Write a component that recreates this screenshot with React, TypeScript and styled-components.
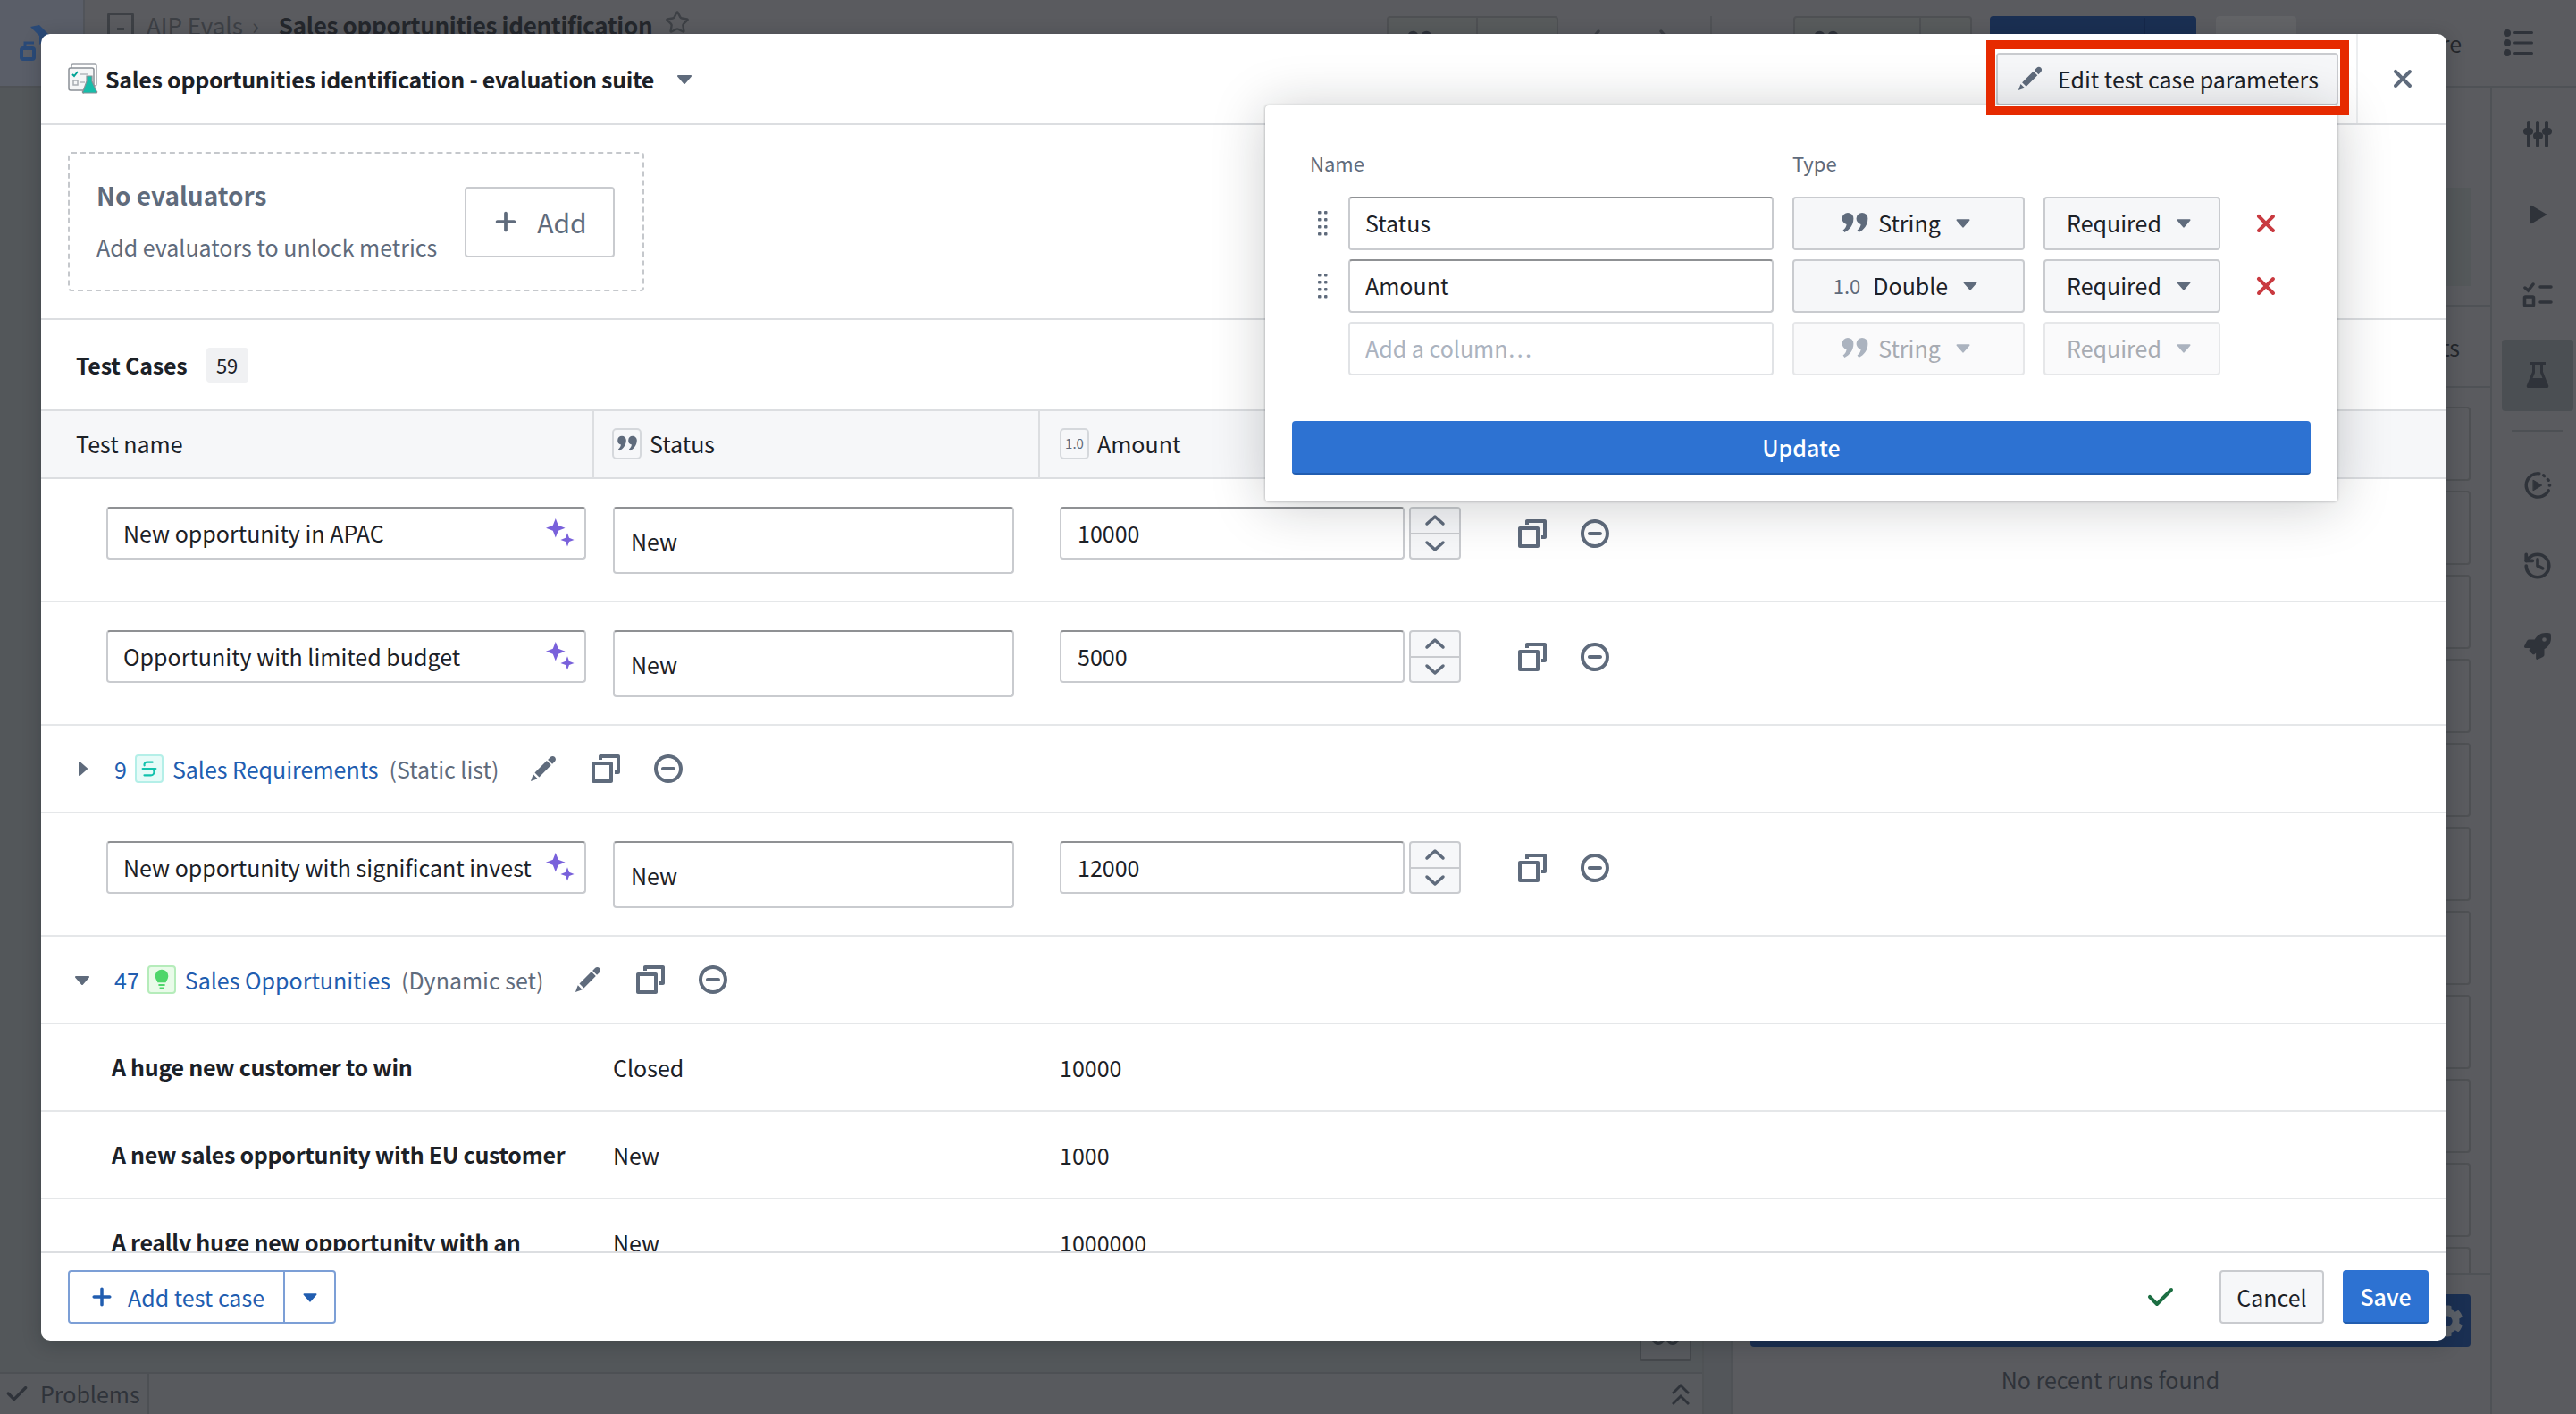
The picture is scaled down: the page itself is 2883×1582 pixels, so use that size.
import React from "react";
import styled, { createGlobalStyle } from "styled-components";
import { Strikethrough, History, Star } from "lucide-react";
import { FaRocket, FaCog } from "react-icons/fa";

const FONT = `"Noto Sans CJK SC", "Source Sans Pro", sans-serif`;

const GlobalStyle = createGlobalStyle`
  html, body {
    margin: 0;
    padding: 0;
    background: #5a5b5f;
  }
  * {
    box-sizing: border-box;
  }
  body {
    font-family: ${FONT};
    font-size: 25px;
    line-height: 32px;
    color: #1c2127;
  }
`;

const PATHS = {
  cross:
    "M9.41 8l3.29-3.29c.19-.18.3-.43.3-.71a1.003 1.003 0 00-1.71-.71L8 6.59l-3.29-3.3a1.003 1.003 0 00-1.42 1.42L6.59 8 3.3 11.29c-.19.18-.3.43-.3.71a1.003 1.003 0 001.71.71L8 9.41l3.29 3.29c.18.19.43.3.71.3a1.003 1.003 0 00.71-1.71L9.41 8z",
  plus: "M13 7H9V3c0-.55-.45-1-1-1s-1 .45-1 1v4H3c-.55 0-1 .45-1 1s.45 1 1 1h4v4c0 .55.45 1 1 1s1-.45 1-1V9h4c.55 0 1-.45 1-1s-.45-1-1-1z",
  caretDown:
    "M12 6.5c0-.28-.22-.5-.5-.5h-7a.495.495 0 00-.37.83l3.5 4c.09.1.22.17.37.17s.28-.07.37-.17l3.5-4c.08-.09.13-.2.13-.33z",
  caretRight:
    "M11 8c0-.15-.07-.28-.17-.37l-4-3.5A.495.495 0 006 4.5v7a.495.495 0 00.83.37l4-3.5c.1-.09.17-.22.17-.37z",
  edit: "M3.25 10.26l2.47 2.47 6.69-6.69-2.46-2.48-6.7 6.7zM.99 14.99l3.86-1.39-2.46-2.44-1.4 3.83zm12.25-14c-.48 0-.92.2-1.24.51l-1.44 1.44 2.47 2.47 1.44-1.44c.32-.32.51-.75.51-1.24.01-.95-.77-1.74-1.74-1.74z",
  duplicate:
    "M15 0H5c-.55 0-1 .45-1 1v2h2V2h8v7h-1v2h2c.55 0 1-.45 1-1V1c0-.55-.45-1-1-1zm-4 4H1c-.55 0-1 .45-1 1v10c0 .55.45 1 1 1h10c.55 0 1-.45 1-1V5c0-.55-.45-1-1-1zm-1 10H2V6h8v8z",
  remove:
    "M10.99 6.99h-6c-.55 0-1 .45-1 1s.45 1 1 1h6c.55 0 1-.45 1-1s-.45-1-1-1zm-3-7c-4.42 0-8 3.58-8 8s3.58 8 8 8 8-3.58 8-8-3.58-8-8-8zm0 14c-3.31 0-6-2.69-6-6 0-3.31 2.69-6 6-6s6 2.69 6 6c0 3.31-2.69 6-6 6z",
  tick: "M14 3c-.28 0-.53.11-.71.29L6 10.59l-3.29-3.3a1.003 1.003 0 00-1.42 1.42l4 4c.18.18.43.29.71.29s.53-.11.71-.29l8-8A1.003 1.003 0 0014 3z",
  quote:
    "M4 2.5a3.3 3.3 0 00-.7 6.5c-.2 1.4-.9 2.5-2 3.3l.9 1.2C5 12 7.2 9.4 7.2 5.7A3.2 3.2 0 004 2.5zm8 0a3.3 3.3 0 00-.7 6.5c-.2 1.4-.9 2.5-2 3.3l.9 1.2c2.8-1.5 5-4.1 5-7.8A3.2 3.2 0 0012 2.5z",
  sparkle:
    "M5.4 0L6.900 3.900 10.800 5.400 6.900 6.900 5.400 10.800 3.900 6.900 0 5.400 3.900 3.900zM12 8.100L13 10.900 15.800 12 13 13 12 15.800 11 13 8.200 12 11 10.900z",
  bulb: "M8 1a4.500 4.500 0 00-4.500 4.500c0 1.900 1.200 3 1.700 4.500h5.600c.5-1.500 1.700-2.600 1.700-4.500A4.500 4.500 0 008 1zM5.800 11h4.400v1.300H5.800zM6.500 13.200h3v1.600h-3z",
  dblUp: "M8 2L3 7l1 1 4-4 4 4 1-1zM8 8l-5 5 1 1 4-4 4 4 1-1z",
};

const Glyph = styled.svg.attrs<{ $size: number; $color?: string }>({
  viewBox: "0 0 16 16",
})<{ $size: number; $color?: string }>`
  width: ${(p) => p.$size}px;
  height: ${(p) => p.$size}px;
  flex: none;
  fill: ${(p) => p.$color || "#5f6b7c"};
  display: block;
`;

const Icon = ({ d, size, color }: { d: keyof typeof PATHS; size: number; color?: string }) => (
  <Glyph $size={size} $color={color}>
    <path d={PATHS[d]} fillRule="evenodd" />
  </Glyph>
);

/* ---------- dimmed app behind the dialog ---------- */

const Page = styled.div`
  position: relative;
  width: 2883px;
  height: 1582px;
  overflow: hidden;
  display: flex;
  flex-direction: column;
  background: #5a5b5f;
`;

const TopBar = styled.div`
  height: 98px;
  flex: none;
  display: flex;
  border-bottom: 2px solid #4f5256;
`;

const NavLogo = styled.div`
  width: 95px;
  flex: none;
  padding: 28px 0 0 20px;
  background: #5a5e68;
  border-right: 2px solid #51545a;
`;

const Crumbs = styled.div`
  display: flex;
  align-items: flex-start;
  width: 1457px;
  flex: none;
  padding: 11px 0 0 25px;
  font-size: 26px;
  line-height: 34px;
  color: #3d4045;
`;

const CrumbBox = styled.span`
  width: 30px;
  height: 38px;
  margin: 3px 14px 0 0;
  padding: 14px 8px 0;
  border: 3px solid #3d4045;
  border-radius: 3px;
  &::after {
    content: "";
    display: block;
    height: 3px;
    background: #3d4045;
  }
`;

const CrumbSep = styled.span`
  margin: 0 22px 0 10px;
`;

const CrumbTitle = styled.span`
  font-weight: 600;
  letter-spacing: -0.3px;
  color: #24272c;
  margin-right: 14px;
`;

const TopTools = styled.div`
  display: flex;
  padding-top: 18px;
  flex: 1;
`;

const GhostButton = styled.div<{ $w: number; $ml: number; $dark?: boolean; $soft?: boolean }>`
  width: ${(p) => p.$w}px;
  height: 60px;
  flex: none;
  display: flex;
  margin-left: ${(p) => p.$ml}px;
  border: 2px solid ${(p) => (p.$dark ? "#1a2f52" : p.$soft ? "#626366" : "#4e5053")};
  background: ${(p) => (p.$dark ? "#1a2f52" : p.$soft ? "#626366" : "#585b5c")};
  border-radius: 4px;
`;

const GhostSegment = styled.div<{ $w: number; $dark?: boolean }>`
  width: ${(p) => p.$w}px;
  flex: none;
  padding: 10px 0 0 20px;
  border-right: 2px solid ${(p) => (p.$dark ? "#16284a" : "#4e5053")};
`;

const NavArrows = styled.div`
  width: 170px;
  flex: none;
  display: flex;
  justify-content: space-between;
  padding: 14px 42px 0 32px;
`;

const ToolDivider = styled.div`
  width: 2px;
  height: 60px;
  flex: none;
  background: #505256;
`;

const ShareLabel = styled.span`
  margin: 14px 0 0 85px;
  width: 100px;
  text-align: right;
  color: #24272c;
  flex: none;
`;

const MenuLines = styled.div`
  flex: none;
  margin: 14px 0 0 47px;
  width: 34px;
`;

const Main = styled.div`
  flex: 1;
  min-height: 0;
  display: flex;
`;

const LeftColumn = styled.div`
  width: 1907px;
  flex: none;
  display: flex;
  flex-direction: column;
  border-right: 2px solid #505356;
`;

const Canvas = styled.div`
  flex: 1;
  background: #53575a;
  display: flex;
  align-items: flex-end;
  justify-content: flex-end;
  padding: 0 12px 12px 0;
`;

const ZoomBox = styled.div`
  width: 58px;
  height: 60px;
  padding: 26px 0 0 12px;
  border: 2px solid #45484c;
  border-radius: 3px;
  background: #585a5e;
`;

const ProblemsBar = styled.div`
  height: 47px;
  flex: none;
  display: flex;
  align-items: center;
  background: #585a5e;
  border-top: 2px solid #4d5054;
  color: #2f333a;
`;

const ProblemsTab = styled.div`
  width: 167px;
  height: 100%;
  display: flex;
  align-items: center;
  gap: 13px;
  padding: 0 0 2px 6px;
  border-right: 2px solid #4d5054;
`;

const ProblemsEnd = styled.div`
  margin-left: auto;
  padding-right: 8px;
`;

const Gutter = styled.div`
  width: 30px;
  flex: none;
  background: #53565a;
`;

const RightPanel = styled.div`
  width: 852px;
  flex: none;
  display: flex;
  flex-direction: column;
  border-left: 2px solid #4f5256;
  border-right: 2px solid #4f5256;
`;

const PanelTop = styled.div`
  padding: 112px 22px 21px 20px;
  border-bottom: 2px solid #4f5256;
`;

const PanelBlock = styled.div`
  height: 110px;
  background: #54585a;
`;

const ResultsTab = styled.div`
  height: 91px;
  flex: none;
  display: flex;
  align-items: center;
  justify-content: flex-end;
  padding-right: 34px;
  color: #24272c;
  border-bottom: 2px solid #4f5256;
`;

const CardList = styled.div`
  flex: 1;
  min-height: 0;
  overflow: hidden;
  display: flex;
  flex-direction: column;
  gap: 11px;
  padding: 21px 22px 0 20px;
`;

const Card = styled.div`
  height: 83px;
  flex: none;
  border: 2px solid #4e5053;
  border-radius: 4px;
`;

const PanelFoot = styled.div`
  height: 158px;
  flex: none;
  padding: 22px 22px 0 20px;
  border-top: 2px solid #4f5256;
`;

const RunButton = styled.div`
  height: 59px;
  display: flex;
  align-items: center;
  justify-content: flex-end;
  padding-right: 8px;
  background: #1a2f52;
  border-radius: 4px;
`;

const NoRuns = styled.div`
  margin-top: 20px;
  text-align: center;
  color: #2f333a;
`;

const Sidebar = styled.div`
  flex: 1;
  display: flex;
  flex-direction: column;
  align-items: center;
  padding: 12px 0 0 8px;
`;

const SideItem = styled.div<{ $active?: boolean }>`
  width: 80px;
  height: 80px;
  margin-bottom: 10px;
  display: flex;
  align-items: center;
  justify-content: center;
  border-radius: 4px;
  background: ${(p) => (p.$active ? "#4b4f53" : "transparent")};
  color: #2f333a;
`;

const SideDivider = styled.div`
  width: 58px;
  height: 2px;
  background: #4d5054;
  margin: 11px 0 20px;
`;

/* ---------- dialog ---------- */

const Modal = styled.div`
  position: absolute;
  left: 46px;
  top: 38px;
  width: 2692px;
  height: 1462px;
  display: flex;
  flex-direction: column;
  background: #fff;
  border-radius: 10px;
  box-shadow: 0 4px 20px rgba(16, 22, 26, 0.25);
`;

const Header = styled.div`
  height: 102px;
  flex: none;
  display: flex;
  align-items: center;
  padding-left: 30px;
  border-bottom: 2px solid #dcdee1;
`;

const Title = styled.div`
  margin-left: 8px;
  font-weight: 600;
  letter-spacing: -0.3px;
`;

const TitleCaret = styled.div`
  margin-left: 18px;
`;

const EditButton = styled.button`
  position: relative;
  margin-left: auto;
  width: 383px;
  height: 59px;
  flex: none;
  display: flex;
  align-items: center;
  gap: 16px;
  padding: 0 0 0 21px;
  font: inherit;
  color: #1c2127;
  background: #f6f7f9;
  border: 2px solid #c9cbcf;
  border-radius: 4px;
  &::after {
    content: "";
    position: absolute;
    left: -13px;
    right: -14px;
    top: -16px;
    bottom: -13px;
    border: 10px solid #e62a00;
    z-index: 5;
    pointer-events: none;
  }
`;

const HeaderClose = styled.div`
  align-self: stretch;
  margin-left: 20px;
  width: 101px;
  flex: none;
  display: flex;
  align-items: center;
  justify-content: center;
  border-left: 2px solid #eceef0;
`;

const EvalSection = styled.div`
  height: 218px;
  flex: none;
  padding: 30px;
  border-bottom: 2px solid #dcdee1;
`;

const DashedBox = styled.div`
  width: 645px;
  height: 156px;
  display: flex;
  align-items: center;
  padding-left: 30px;
  border: 2px dashed #c5c8cc;
  border-radius: 4px;
  color: #5f6b7c;
`;

const EvalText = styled.div`
  width: 412px;
  flex: none;
  margin-bottom: 6px;
`;

const EvalTitle = styled.div`
  font-size: 28px;
  line-height: 38px;
  font-weight: 600;
  margin-bottom: 23px;
`;

const AddButton = styled.div`
  width: 168px;
  height: 79px;
  display: flex;
  align-items: center;
  justify-content: center;
  gap: 20px;
  font-size: 30px;
  border: 2px solid #c9cbcf;
  border-radius: 4px;
`;

const CasesBar = styled.div`
  height: 100px;
  flex: none;
  display: flex;
  align-items: center;
  gap: 21px;
  padding-left: 39px;
  font-weight: 600;
  letter-spacing: -0.2px;
`;

const CountBadge = styled.span`
  width: 47px;
  height: 39px;
  display: flex;
  align-items: center;
  justify-content: center;
  font-size: 22px;
  font-weight: 400;
  background: #f0f1f3;
  border-radius: 4px;
`;

const TableHead = styled.div`
  height: 78px;
  flex: none;
  display: flex;
  background: #f6f7f9;
  border-top: 2px solid #dcdee1;
  border-bottom: 2px solid #dcdee1;
`;

const HeadCell = styled.div<{ $w: number; $pl: number }>`
  width: ${(p) => p.$w}px;
  flex: none;
  display: flex;
  align-items: center;
  gap: 9px;
  padding: 0 0 2px ${(p) => p.$pl}px;
  border-right: 2px solid #dcdee1;
`;

const TypeChip = styled.span`
  width: 33px;
  height: 35px;
  display: flex;
  align-items: center;
  justify-content: center;
  font-size: 15px;
  color: #5f6b7c;
  background: #f6f7f9;
  border: 2px solid #d5d8dc;
  border-radius: 5px;
`;

const TableBody = styled.div`
  flex: 1;
  min-height: 0;
  overflow: hidden;
`;

const CaseRow = styled.div`
  height: 138px;
  display: flex;
  align-items: flex-start;
  padding: 31px 0 0 73px;
  border-bottom: 2px solid #e5e7e9;
`;

const inputBase = `
  font-family: ${FONT};
  font-size: 25px;
  color: #1c2127;
  background: #fff;
  border: 2px solid #c9cbcf;
  border-top-color: #8f9194;
  border-radius: 4px;
`;

const NameField = styled.div`
  ${inputBase}
  width: 537px;
  height: 59px;
  flex: none;
  display: flex;
  align-items: center;
  justify-content: space-between;
  padding: 0 11px 1px 17px;
`;

const StatusField = styled.input`
  ${inputBase}
  width: 449px;
  height: 75px;
  flex: none;
  margin-left: 30px;
  padding: 0 18px;
`;

const AmountField = styled.input`
  ${inputBase}
  width: 386px;
  height: 59px;
  flex: none;
  margin-left: 51px;
  padding: 0 18px 1px;
`;

const Stepper = styled.div`
  width: 58px;
  height: 59px;
  flex: none;
  margin-left: 5px;
  display: flex;
  flex-direction: column;
  border: 2px solid #c9cbcf;
  border-radius: 4px;
  background: #f6f7f9;
`;

const StepHalf = styled.div<{ $first?: boolean }>`
  flex: 1;
  display: flex;
  align-items: center;
  justify-content: center;
  border-bottom: ${(p) => (p.$first ? "2px solid #c9cbcf" : "none")};
`;

const RowActions = styled.div<{ $ml: number; $gap: number }>`
  height: 59px;
  display: flex;
  align-items: center;
  gap: ${(p) => p.$gap}px;
  margin-left: ${(p) => p.$ml}px;
`;

const GroupRow = styled.div`
  height: 98px;
  display: flex;
  align-items: center;
  padding-left: 30px;
  border-bottom: 2px solid #e5e7e9;
`;

const GroupCaret = styled.div`
  width: 52px;
  flex: none;
`;

const GroupCount = styled.span`
  color: #215db0;
  margin-right: 9px;
`;

const SetChip = styled.span<{ $bg: string; $line: string }>`
  width: 32px;
  height: 32px;
  flex: none;
  display: flex;
  align-items: center;
  justify-content: center;
  background: ${(p) => p.$bg};
  border: 2px solid ${(p) => p.$line};
  border-radius: 4px;
`;

const GroupLink = styled.span`
  color: #215db0;
  margin-left: 10px;
`;

const GroupKind = styled.span`
  color: #5f6b7c;
  margin-left: 12px;
`;

const PlainRow = styled.div`
  height: 98px;
  display: flex;
  align-items: center;
  padding-left: 79px;
  border-bottom: 2px solid #e5e7e9;
`;

const PlainName = styled.div`
  width: 561px;
  flex: none;
  margin-bottom: 2px;
  font-weight: 600;
  letter-spacing: -0.3px;
  white-space: nowrap;
`;

const PlainStatus = styled.div`
  width: 500px;
  flex: none;
`;

const Footer = styled.div`
  height: 100px;
  flex: none;
  display: flex;
  align-items: center;
  padding: 0 20px 0 30px;
  border-top: 2px solid #dcdee1;
`;

const SplitButton = styled.div`
  width: 300px;
  height: 60px;
  display: flex;
  color: #215db0;
  border: 2px solid #7c9fd6;
  border-radius: 4px;
`;

const SplitMain = styled.div`
  width: 241px;
  flex: none;
  display: flex;
  align-items: center;
  gap: 15px;
  padding-left: 22px;
  border-right: 2px solid #7c9fd6;
`;

const SplitCaret = styled.div`
  flex: 1;
  display: flex;
  align-items: center;
  justify-content: center;
`;

const SavedTick = styled.div`
  margin-left: auto;
  margin-right: 50px;
`;

const CancelButton = styled.div`
  width: 117px;
  height: 60px;
  display: flex;
  align-items: center;
  justify-content: center;
  background: #f6f7f9;
  border: 2px solid #c9cbcf;
  border-radius: 4px;
`;

const SaveButton = styled.div`
  width: 96px;
  height: 60px;
  margin-left: 21px;
  display: flex;
  align-items: center;
  justify-content: center;
  color: #fff;
  font-weight: 500;
  background: #2d72d2;
  border-bottom: 2px solid #215db0;
  border-radius: 4px;
`;

/* ---------- parameters popover ---------- */

const Popover = styled.div`
  position: absolute;
  left: 1370px;
  top: 80px;
  width: 1200px;
  padding: 52px 30px 30px;
  background: #fff;
  border-radius: 4px;
  box-shadow: 0 0 3px rgba(16, 22, 26, 0.35), 0 4px 60px rgba(16, 22, 26, 0.22);
  z-index: 2;
`;

const ParamGrid = styled.div`
  margin-left: 20px;
  display: grid;
  grid-template-columns: 22px 476px 260px 198px 60px;
  column-gap: 21px;
  row-gap: 10px;
  align-items: center;
`;

const ParamLabel = styled.div<{ $wide?: boolean }>`
  grid-column: ${(p) => (p.$wide ? "1 / span 2" : "3 / span 3")};
  height: 30px;
  margin-bottom: 10px;
  font-size: 22px;
  line-height: 25px;
  color: #5f6b7c;
`;

const DragDots = styled.svg.attrs({ viewBox: "0 0 12 28" })`
  width: 12px;
  height: 28px;
  margin-left: 8px;
  fill: #5f6b7c;
`;

const ParamInput = styled.input`
  ${inputBase}
  height: 60px;
  width: 100%;
  padding: 0 18px 3px 17px;
  &::placeholder {
    color: #abb3bf;
    opacity: 1;
  }
  &:disabled {
    border-top-color: #d6d8da;
    border-color: #e1e3e6;
  }
`;

const SelectButton = styled.div<{ $off?: boolean }>`
  height: 60px;
  display: flex;
  align-items: center;
  justify-content: center;
  gap: 10px;
  padding-bottom: 2px;
  color: ${(p) => (p.$off ? "#a7abb2" : "#1c2127")};
  background: ${(p) => (p.$off ? "#fafafb" : "#f6f7f9")};
  border: 2px solid ${(p) => (p.$off ? "#e6e7e9" : "#c9cbcf")};
  border-radius: 4px;
`;

const DoubleMark = styled.span`
  font-size: 22px;
  color: #5f6b7c;
  margin-right: 4px;
`;

const RemoveCell = styled.div`
  display: flex;
  justify-content: center;
`;

const UpdateButton = styled.div`
  height: 60px;
  margin-top: 51px;
  padding-bottom: 1px;
  display: flex;
  align-items: center;
  justify-content: center;
  color: #fff;
  font-weight: 500;
  background: #2d72d2;
  border-bottom: 2px solid #215db0;
  border-radius: 4px;
`;

const cases = [
  { name: "New opportunity in APAC", amount: "10000" },
  { name: "Opportunity with limited budget", amount: "5000" },
];

const plainRows = [
  { name: "A huge new customer to win", status: "Closed", amount: "10000" },
  { name: "A new sales opportunity with EU customer", status: "New", amount: "1000" },
  { name: "A really huge new opportunity with an", status: "New", amount: "1000000" },
];

const Dots = () => (
  <DragDots>
    {[0, 8, 16, 24].map((y) => (
      <React.Fragment key={y}>
        <rect x="1" y={y} width="3.500" height="3.500" rx="1" />
        <rect x="8" y={y} width="3.500" height="3.500" rx="1" />
      </React.Fragment>
    ))}
  </DragDots>
);

const Chevron = ({ up }: { up?: boolean }) => (
  <svg width="24" height="14" viewBox="0 0 24 14" fill="none" stroke="#5f6b7c" strokeWidth="3.500" strokeLinecap="round" strokeLinejoin="round">
    <path d={up ? "M3 11l9-8 9 8" : "M3 3l9 8 9-8"} />
  </svg>
);

const SuiteIcon = () => (
  <svg width="34" height="34" viewBox="0 0 34 34">
    <rect x="4" y="1" width="28" height="24" rx="2" fill="#fff" stroke="#9ea3a9" strokeWidth="1.500" />
    <rect x="1" y="5" width="28" height="25" rx="2" fill="#f5f6f7" stroke="#8b9096" strokeWidth="1.500" />
    <path d="M5 12l2 2 4-5" fill="none" stroke="#00a396" strokeWidth="2" />
    <rect x="6" y="19" width="5" height="5" fill="none" stroke="#a8adb3" strokeWidth="1.500" />
    <path d="M14 12h8M14 21h5" stroke="#c3c7cb" strokeWidth="2" />
    <path d="M21 14h6v6l5 11a1 1 0 01-1 2H18a1 1 0 01-1-2l4-11z" fill="#17bdaa" stroke="#8b9096" strokeWidth="1.200" />
  </svg>
);

const TestCaseRow = ({ name, amount }: { name: string; amount: string }) => (
  <CaseRow>
    <NameField>
      {name}
      <Icon d="sparkle" size={32} color="#7961db" />
    </NameField>
    <StatusField defaultValue="New" />
    <AmountField defaultValue={amount} />
    <Stepper>
      <StepHalf $first>
        <Chevron up />
      </StepHalf>
      <StepHalf>
        <Chevron />
      </StepHalf>
    </Stepper>
    <RowActions $ml={64} $gap={38}>
      <Icon d="duplicate" size={32} />
      <Icon d="remove" size={32} />
    </RowActions>
  </CaseRow>
);

const App: React.FC = () => {
  return (
    <Page>
      <GlobalStyle />
      <TopBar>
        <NavLogo>
          <svg width="50" height="44" viewBox="0 0 50 44" fill="none">
            <path d="M24 12L14 2l10-2 12 12-12 10z" fill="#2a4a78" />
            <path d="M8 26v-6h10" stroke="#2a4a78" strokeWidth="3" />
            <rect x="4" y="26" width="14" height="12" rx="2" stroke="#2a4a78" strokeWidth="4" />
          </svg>
        </NavLogo>
        <Crumbs>
          <CrumbBox />
          AIP Evals
          <CrumbSep>›</CrumbSep>
          <CrumbTitle>Sales opportunities identification</CrumbTitle>
          <Star size={28} color="#3d4045" strokeWidth={2} />
        </Crumbs>
        <TopTools>
          <GhostButton $w={192} $ml={0}>
            <GhostSegment $w={100}>
              <Icon d="quote" size={30} color="#2f333a" />
            </GhostSegment>
          </GhostButton>
          <NavArrows>
            <svg width="16" height="30" viewBox="0 0 16 30" fill="none" stroke="#3d4045" strokeWidth="3.500" strokeLinecap="round">
              <path d="M13 3L3 15l10 12" />
            </svg>
            <svg width="16" height="30" viewBox="0 0 16 30" fill="none" stroke="#3d4045" strokeWidth="3.500" strokeLinecap="round">
              <path d="M3 3l10 12L3 27" />
            </svg>
          </NavArrows>
          <ToolDivider />
          <GhostButton $w={200} $ml={91}>
            <GhostSegment $w={141}>
              <Icon d="quote" size={30} color="#2f333a" />
            </GhostSegment>
          </GhostButton>
          <GhostButton $w={231} $ml={20} $dark>
            <GhostSegment $w={172} $dark />
          </GhostButton>
          <GhostButton $w={90} $ml={22} $soft />
          <ShareLabel>Share</ShareLabel>
          <MenuLines>
            <svg width="34" height="32" viewBox="0 0 34 32" fill="#2f333a">
              <circle cx="4" cy="5" r="4" />
              <circle cx="4" cy="16" r="4" />
              <circle cx="4" cy="27" r="4" />
              <rect x="11" y="3" width="22" height="3" rx="1.500" />
              <rect x="11" y="14.500" width="22" height="3" rx="1.500" />
              <rect x="11" y="26" width="22" height="3" rx="1.500" />
            </svg>
          </MenuLines>
        </TopTools>
      </TopBar>
      <Main>
        <LeftColumn>
          <Canvas>
            <ZoomBox>
              <svg width="30" height="14" viewBox="0 0 30 14" fill="none" stroke="#2f333a" strokeWidth="4" display="block">
                <circle cx="7" cy="7" r="5" />
                <circle cx="23" cy="7" r="5" />
              </svg>
            </ZoomBox>
          </Canvas>
          <ProblemsBar>
            <ProblemsTab>
              <Icon d="tick" size={26} color="#2f333a" />
              Problems
            </ProblemsTab>
            <ProblemsEnd>
              <Icon d="dblUp" size={32} color="#2f333a" />
            </ProblemsEnd>
          </ProblemsBar>
        </LeftColumn>
        <Gutter />
        <RightPanel>
          <PanelTop>
            <PanelBlock />
          </PanelTop>
          <ResultsTab>Results</ResultsTab>
          <CardList>
            {Array.from({ length: 11 }, (_, i) => (
              <Card key={i} />
            ))}
          </CardList>
          <PanelFoot>
            <RunButton>
              <FaCog size={36} color="#5b6068" />
            </RunButton>
            <NoRuns>No recent runs found</NoRuns>
          </PanelFoot>
        </RightPanel>
        <Sidebar>
          <SideItem>
            <svg width="34" height="32" viewBox="0 0 34 32" fill="#2f333a">
              <rect x="5" y="1" width="4" height="30" rx="2" />
              <rect x="15" y="1" width="4" height="30" rx="2" />
              <rect x="25" y="1" width="4" height="30" rx="2" />
              <rect x="1" y="9" width="11" height="8" rx="4" />
              <rect x="12" y="14" width="11" height="8" rx="4" />
              <rect x="22" y="9" width="11" height="8" rx="4" />
            </svg>
          </SideItem>
          <SideItem>
            <svg width="20" height="22" viewBox="0 0 20 22" fill="#2f333a">
              <path d="M2 2a1 1 0 011.500-1L19 10a1 1 0 010 2L3.500 21A1 1 0 012 20z" />
            </svg>
          </SideItem>
          <SideItem>
            <svg width="34" height="28" viewBox="0 0 34 28" fill="none" stroke="#2f333a" strokeWidth="3.500" strokeLinecap="round">
              <path d="M3 6l3.500 3L12 2M20 5h12M20 22h12" />
              <rect x="2.500" y="16" width="10" height="10" rx="1" />
            </svg>
          </SideItem>
          <SideItem $active>
            <svg width="26" height="30" viewBox="0 0 26 30" fill="#2f333a">
              <path d="M4 0h18v3h-3v8l6 15a2 2 0 01-2 3H3a2 2 0 01-2-3l6-15V3H4zm6 3v9l-2.500 6h11L16 12V3z" fillRule="evenodd" />
            </svg>
          </SideItem>
          <SideDivider />
          <SideItem>
            <svg width="34" height="34" viewBox="0 0 36 36" fill="none" stroke="#2f333a" strokeWidth="3.500" strokeLinecap="round">
              <path d="M20 4A14 14 0 1031 24" />
              <path d="M25 6l1 1M30 11l1 1M32 18h.5" />
              <path d="M13 12l10 6-10 6z" fill="#2f333a" strokeWidth="1" />
            </svg>
          </SideItem>
          <SideItem>
            <History size={34} strokeWidth={2.6} />
          </SideItem>
          <SideItem>
            <FaRocket size={30} />
          </SideItem>
        </Sidebar>
      </Main>

      <Modal>
        <Header>
          <SuiteIcon />
          <Title>Sales opportunities identification - evaluation suite</Title>
          <TitleCaret>
            <Icon d="caretDown" size={32} />
          </TitleCaret>
          <EditButton>
            <Icon d="edit" size={30} />
            Edit test case parameters
          </EditButton>
          <HeaderClose>
            <Icon d="cross" size={32} />
          </HeaderClose>
        </Header>

        <EvalSection>
          <DashedBox>
            <EvalText>
              <EvalTitle>No evaluators</EvalTitle>
              Add evaluators to unlock metrics
            </EvalText>
            <AddButton>
              <Icon d="plus" size={30} />
              Add
            </AddButton>
          </DashedBox>
        </EvalSection>

        <CasesBar>
          Test Cases
          <CountBadge>59</CountBadge>
        </CasesBar>

        <TableHead>
          <HeadCell $w={619} $pl={39}>
            Test name
          </HeadCell>
          <HeadCell $w={499} $pl={20}>
            <TypeChip>
              <Icon d="quote" size={24} />
            </TypeChip>
            Status
          </HeadCell>
          <HeadCell $w={400} $pl={22}>
            <TypeChip>1.0</TypeChip>
            Amount
          </HeadCell>
        </TableHead>

        <TableBody>
          {cases.map((c) => (
            <TestCaseRow key={c.name} name={c.name} amount={c.amount} />
          ))}
          <GroupRow>
            <GroupCaret>
              <Icon d="caretRight" size={32} />
            </GroupCaret>
            <GroupCount>9</GroupCount>
            <SetChip $bg="#e6fbf8" $line="#b4efe8">
              <Strikethrough size={22} color="#13c2ad" strokeWidth={2.4} />
            </SetChip>
            <GroupLink>Sales Requirements</GroupLink>
            <GroupKind>(Static list)</GroupKind>
            <RowActions $ml={34} $gap={38}>
              <Icon d="edit" size={32} />
              <Icon d="duplicate" size={32} />
              <Icon d="remove" size={32} />
            </RowActions>
          </GroupRow>
          <TestCaseRow name="New opportunity with significant invest" amount="12000" />
          <GroupRow>
            <GroupCaret>
              <Icon d="caretDown" size={32} />
            </GroupCaret>
            <GroupCount>47</GroupCount>
            <SetChip $bg="#e9fbe9" $line="#b5ecba">
              <Icon d="bulb" size={26} color="#4fd66b" />
            </SetChip>
            <GroupLink>Sales Opportunities</GroupLink>
            <GroupKind>(Dynamic set)</GroupKind>
            <RowActions $ml={33} $gap={38}>
              <Icon d="edit" size={32} />
              <Icon d="duplicate" size={32} />
              <Icon d="remove" size={32} />
            </RowActions>
          </GroupRow>
          {plainRows.map((r) => (
            <PlainRow key={r.name}>
              <PlainName>{r.name}</PlainName>
              <PlainStatus>{r.status}</PlainStatus>
              {r.amount}
            </PlainRow>
          ))}
        </TableBody>

        <Footer>
          <SplitButton>
            <SplitMain>
              <Icon d="plus" size={28} color="#215db0" />
              Add test case
            </SplitMain>
            <SplitCaret>
              <Icon d="caretDown" size={30} color="#215db0" />
            </SplitCaret>
          </SplitButton>
          <SavedTick>
            <Icon d="tick" size={32} color="#1c6e42" />
          </SavedTick>
          <CancelButton>Cancel</CancelButton>
          <SaveButton>Save</SaveButton>
        </Footer>

        <Popover>
          <ParamGrid>
            <ParamLabel $wide>Name</ParamLabel>
            <ParamLabel>Type</ParamLabel>

            <Dots />
            <ParamInput defaultValue="Status" />
            <SelectButton>
              <Icon d="quote" size={32} />
              String
              <Icon d="caretDown" size={30} />
            </SelectButton>
            <SelectButton>
              Required
              <Icon d="caretDown" size={30} />
            </SelectButton>
            <RemoveCell>
              <Icon d="cross" size={32} color="#c93a40" />
            </RemoveCell>

            <Dots />
            <ParamInput defaultValue="Amount" />
            <SelectButton>
              <DoubleMark>1.0</DoubleMark>
              Double
              <Icon d="caretDown" size={30} />
            </SelectButton>
            <SelectButton>
              Required
              <Icon d="caretDown" size={30} />
            </SelectButton>
            <RemoveCell>
              <Icon d="cross" size={32} color="#c93a40" />
            </RemoveCell>

            <span />
            <ParamInput placeholder="Add a column…" disabled />
            <SelectButton $off>
              <Icon d="quote" size={32} color="#abb3bf" />
              String
              <Icon d="caretDown" size={30} color="#abb3bf" />
            </SelectButton>
            <SelectButton $off>
              Required
              <Icon d="caretDown" size={30} color="#abb3bf" />
            </SelectButton>
            <span />
          </ParamGrid>
          <UpdateButton>Update</UpdateButton>
        </Popover>
      </Modal>
    </Page>
  );
};

export default App;
